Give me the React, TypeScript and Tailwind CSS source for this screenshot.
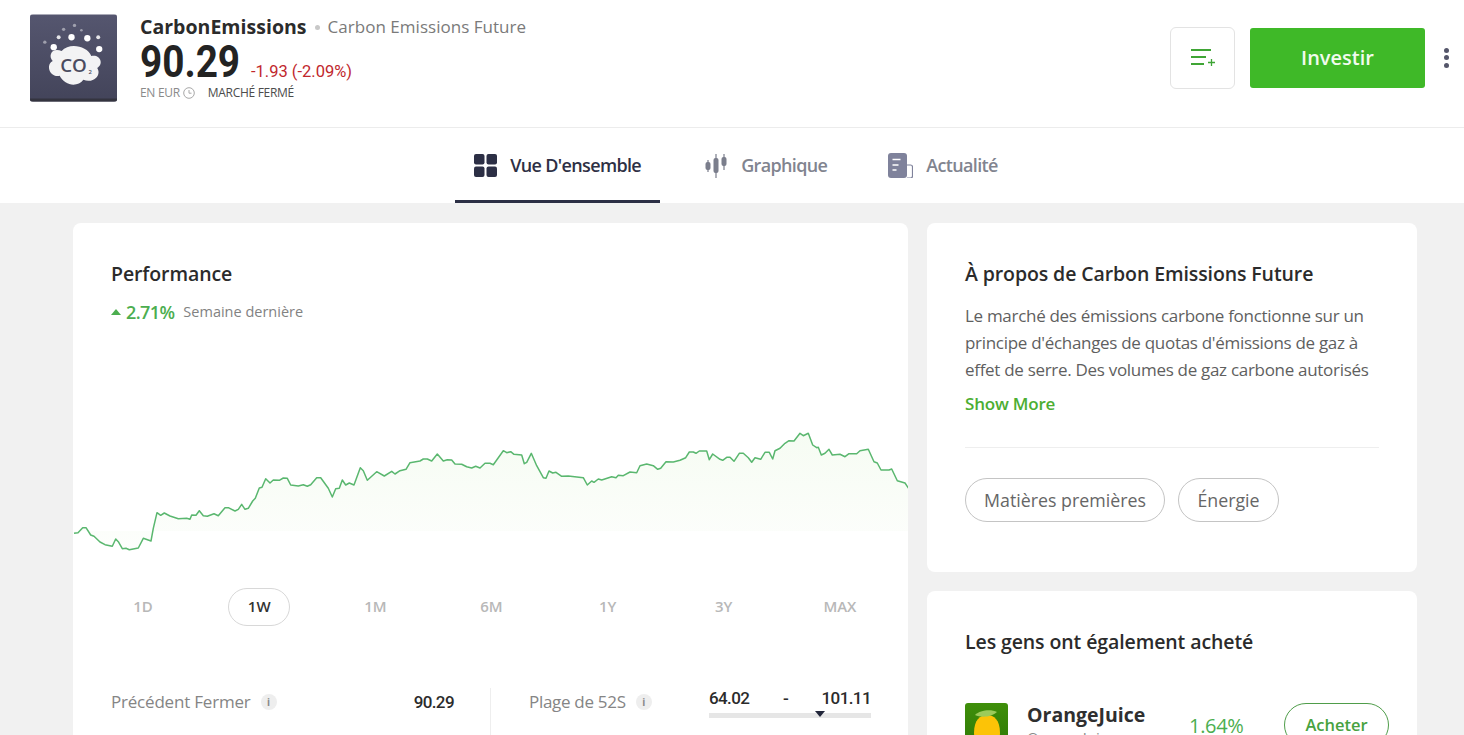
import type { ReactNode } from "react";

const a: number[][] = [[12,340],[24,338],[38,323],[48,323],[62,345],[72,349],[90,366],[105,374],[127,379],[137,357],[145,365],[157,386],[168,385],[178,389],[205,384],[220,355],[243,363],[250,325],[261,278],[272,286],[283,279],[300,288],[325,296],[350,295],[360,298],[365,285],[378,286],[388,272],[400,287],[412,289],[432,281],[445,287],[465,263],[475,263],[495,273],[505,268],[515,253],[525,268],[535,265],[548,243],[556,235],[568,204],[576,202],[587,176],[600,189],[610,180],[628,181],[640,174],[652,175],[662,195],[685,198],[700,194],[712,199],[722,194],[740,173],[752,173],[775,205],[787,231],[797,206],[808,205],[817,180],[827,195],[838,189],[852,195],[871,143],[880,152],[892,181],[920,155],[943,168],[965,154],[975,162],[990,152],[1008,148],[1020,128],[1050,123],[1060,117],[1072,117],[1085,123],[1102,102],[1120,123],[1132,119],[1145,120],[1155,132],[1175,133],[1190,140],[1205,144],[1217,139],[1230,144],[1245,130],[1260,130]];
const b: number[][] = [[10,134],[40,92],[50,98],[62,95],[72,103],[95,105],[103,131],[110,127],[124,100],[140,137],[160,173],[168,175],[177,153],[188,159],[198,157],[215,169],[235,168],[280,173],[292,195],[305,183],[312,187],[325,177],[335,180],[365,170],[378,173],[385,166],[400,167],[420,156],[440,158],[450,137],[470,132],[490,137],[503,148],[512,145],[528,125],[550,126],[570,121],[587,113],[598,96],[610,96],[618,100],[628,93],[650,93],[658,119],[668,102],[690,118],[698,121],[710,112],[720,112],[732,124],[748,100],[760,100],[775,113],[785,127],[795,113],[812,118],[825,97],[838,97],[848,117],[855,92],[870,85],[885,70],[897,62],[912,63],[930,40],[940,47],[955,40],[968,75],[980,83],[985,82],[994,105],[1005,100],[1017,88],[1027,105],[1050,103],[1065,110],[1077,101],[1100,101],[1110,92],[1135,88],[1152,125],[1162,129],[1173,150],[1197,150],[1205,147],[1222,182],[1245,189],[1257,207]];
const pts = [
  ...a.map(([x, y]) => [70 + x / 3, 420 + y / 3]),
  ...b.map(([x, y]) => [490 + x / 3, 420 + y / 3]),
];
const line = pts.map(([x, y], i) => `${i ? "L" : "M"}${x.toFixed(1)} ${y.toFixed(1)}`).join(" ");
const area = `${line} L909 531 L74 531 Z`;

const num = "font-['Roboto',sans-serif]";

function Info() {
  return (
    <span className="ml-[10px] inline-flex h-[16px] w-[16px] shrink-0 items-center justify-center rounded-full bg-[#eeeeee] text-[10px] font-bold leading-none text-[#8a8a8a]">
      i
    </span>
  );
}

function Logo() {
  return (
    <svg width="87" height="88" viewBox="0 0 88 88" className="shrink-0 rounded-[3px]">
      <defs>
        <linearGradient id="lg" x1="0" y1="0" x2="0" y2="1">
          <stop offset="0" stopColor="#55566f" />
          <stop offset="1" stopColor="#43445a" />
        </linearGradient>
      </defs>
      <rect width="88" height="88" fill="url(#lg)" />
      <rect y="85" width="88" height="3" fill="#34343f" />
      <path d="M32 37 C22 33 18 42 23 47 C16 50 19 64 30 62 C35 72 48 74 54 66 C63 70 73 62 68 54 C75 50 71 40 62 42 C58 32 40 28 32 37 Z" fill="#f3f3f4" />
      <text x="44" y="58" textAnchor="middle" fontSize="19" fontWeight="600" fill="#4a4b60" fontFamily="'Open Sans',sans-serif">CO</text>
      <text x="61" y="60" textAnchor="middle" fontSize="6" fontWeight="600" fill="#4a4b60" fontFamily="'Open Sans',sans-serif">2</text>
      <g fill="#fff">
        <circle cx="24" cy="33" r="3.2" />
        <circle cx="42" cy="23" r="3.2" />
        <circle cx="58" cy="24" r="3.2" />
        <circle cx="70" cy="35" r="3.2" />
        <circle cx="29" cy="23" r="2" opacity=".85" />
        <circle cx="69" cy="23" r="2" opacity=".85" />
        <circle cx="15" cy="28" r="1.7" opacity=".45" />
        <circle cx="34" cy="15" r="1.7" opacity=".45" />
        <circle cx="45" cy="11" r="1.7" opacity=".45" />
        <circle cx="52" cy="16" r="1.3" opacity=".45" />
      </g>
    </svg>
  );
}

function GridIcon() {
  return (
    <svg width="23" height="23" viewBox="0 0 23 23" fill="#2c2f45">
      <rect width="10.5" height="10.5" rx="2" />
      <rect x="12.5" width="10.5" height="10.5" rx="2" />
      <rect y="12.5" width="10.5" height="10.5" rx="2" />
      <rect x="12.5" y="12.5" width="10.5" height="10.5" rx="2" />
    </svg>
  );
}

function CandleIcon() {
  return (
    <svg width="24" height="25" viewBox="0 0 24 25" fill="#7b7e8c" stroke="#7b7e8c">
      <path d="M4 7v12M12 1v24M20 1v16" strokeWidth="1.2" fill="none" />
      <rect x="1.5" y="9" width="5" height="8" rx="2" stroke="none" />
      <rect x="9.5" y="5" width="5" height="15" rx="2" stroke="none" />
      <rect x="17.5" y="4" width="5" height="9" rx="2" stroke="none" />
    </svg>
  );
}

function NewsIcon() {
  return (
    <svg width="25" height="25" viewBox="0 0 25 25" fill="none">
      <rect width="19" height="25" rx="3" fill="#7f829b" />
      <path d="M4.5 6.5h8M4.5 12h6M4.5 17h4" stroke="#fff" strokeWidth="1.4" />
      <path d="M19 12h3.5a2 2 0 0 1 2 2v9a2 2 0 0 1-2 2H19" stroke="#7f829b" strokeWidth="1.2" />
    </svg>
  );
}

function OrangeIcon() {
  return (
    <svg width="43" height="44" viewBox="0 0 43 44" className="shrink-0 rounded-[3px]">
      <defs>
        <linearGradient id="og" x1="0" y1="0" x2="0" y2="1">
          <stop offset="0" stopColor="#3f8f0a" />
          <stop offset="1" stopColor="#2f7a06" />
        </linearGradient>
      </defs>
      <rect width="43" height="44" fill="url(#og)" />
      <path d="M9 30 C9 17 15 12 22 12 C29 12 35 17 35 30 C35 38 28 44 22 44 C15 44 9 38 9 30 Z" fill="#fcc307" />
      <path d="M10 12 C15 7 26 6 32 9 C27 14 16 15 10 12 Z" fill="#9ccb5a" />
    </svg>
  );
}

function Tab({ label, active, icon, className }: { label: string; active?: boolean; icon: ReactNode; className: string }) {
  return (
    <div className={`flex h-full items-center border-b-[3px] pt-[2px] ${className} ${active ? "border-[#2c2f45] text-[#2e3044]" : "border-transparent text-[#81848f]"}`}>
      {icon}
      <span className="ml-[13px] text-[18px] font-semibold tracking-[-0.65px]">{label}</span>
    </div>
  );
}

const frames = ["1D", "1W", "1M", "6M", "1Y", "3Y", "MAX"];

export default function App() {
  return (
    <div className="h-[735px] overflow-hidden bg-[#f1f1f1] font-['Open_Sans',sans-serif]">
      <header className="flex h-[128px] items-center border-b border-[#ececec] bg-white pb-[12px] pl-[30px] pr-[15px]">
        <Logo />
        <div className="ml-[23px] flex h-[88px] flex-col">
          <div className="flex h-[26px] items-center">
            <span className="text-[19.5px] font-bold leading-none tracking-[0.02px] text-[#2b2b2b]">CarbonEmissions</span>
            <span className="mx-[8px] mt-[2px] h-[5px] w-[5px] rounded-full bg-[#c8c8c8]" />
            <span className="text-[17px] leading-none tracking-[0.03px] text-[#7a7a7a]">Carbon Emissions Future</span>
          </div>
          <div className="flex h-[44px] items-center">
            <span className={`${num} w-[111px] origin-left scale-x-[0.86] text-[45px] font-bold leading-none text-[#232323]`}>90.29</span>
            <span className={`${num} mt-[21px] text-[16.5px] leading-none text-[#c1272d]`}>-1.93 (-2.09%)</span>
          </div>
          <div className="mt-[1px] flex h-[16px] items-center text-[12px] leading-none text-[#8a8a8a]">
            <span className="tracking-[-0.3px]">EN EUR</span>
            <svg width="12" height="12" viewBox="0 0 12 12" fill="none" stroke="#a8a8a8" className="ml-[3px]">
              <circle cx="6" cy="6" r="5.3" />
              <path d="M6 3v3.2h2.5" />
            </svg>
            <span className="ml-[13px] tracking-[-0.3px] text-[#4c4c4c]">MARCHÉ FERMÉ</span>
          </div>
        </div>
        <div className="ml-auto flex items-center">
          <div className="flex h-[62px] w-[65px] items-center justify-center rounded-[6px] border border-[#e3e3e3]">
            <svg width="26" height="20" viewBox="0 0 26 20" fill="none" stroke="#3fa535" strokeWidth="2">
              <path d="M1 2h20M1 9h15M1 16h13" />
              <path d="M18 14.5h7M21.5 11v7" strokeWidth="1.3" />
            </svg>
          </div>
          <div className="ml-[15px] flex h-[60px] w-[175px] items-center justify-center rounded-[3px] bg-[#3fb928] pt-[1px] text-[20px] font-semibold text-[#f1fbee]">
            Investir
          </div>
          <div className="ml-[19px] flex flex-col gap-[2.5px]">
            <span className="h-[5px] w-[5px] rounded-full bg-[#55566a]" />
            <span className="h-[5px] w-[5px] rounded-full bg-[#55566a]" />
            <span className="h-[5px] w-[5px] rounded-full bg-[#55566a]" />
          </div>
        </div>
      </header>

      <nav className="flex h-[75px] justify-center bg-white pr-[11px]">
        <Tab active label="Vue D'ensemble" icon={<GridIcon />} className="w-[205px] pl-[19px]" />
        <Tab label="Graphique" icon={<CandleIcon />} className="ml-[44px]" />
        <Tab label="Actualité" icon={<NewsIcon />} className="ml-[61px]" />
      </nav>

      <main className="flex gap-[19px] pl-[73px] pt-[20px]">
        <section className="h-[700px] w-[835px] shrink-0 rounded-[8px] bg-white pt-[38px]">
          <h2 className="h-[26px] pl-[38px] text-[19.5px] font-semibold leading-[26px] tracking-[-0.1px] text-[#2b2b2b]">Performance</h2>
          <div className="mt-[12px] flex h-[26px] items-center pl-[38px]">
            <svg width="10" height="6" viewBox="0 0 10 6" fill="#4cae4f"><path d="M5 0l5 6H0z" /></svg>
            <span className="ml-[5px] text-[18px] font-semibold tracking-[-0.6px] text-[#4cae4f]">2.71%</span>
            <span className="ml-[9px] text-[14.5px] text-[#828282]">Semaine dernière</span>
          </div>
          <svg viewBox="73 325 835 250" className="block h-[250px] w-[835px]">
            <defs>
              <linearGradient id="fill" x1="0" y1="0" x2="0" y2="1">
                <stop offset="0" stopColor="#f6fcf3" />
                <stop offset="1" stopColor="#fdfefc" />
              </linearGradient>
            </defs>
            <path d={area} fill="url(#fill)" />
            <path d={line} fill="none" stroke="#5ab76f" strokeWidth="1.5" strokeLinejoin="round" />
          </svg>
          <div className="mt-[13px] grid h-[38px] grid-cols-7 pl-[12px] pr-[10px]">
            {frames.map((f) => (
              <div key={f} className="flex items-center justify-center">
                {f === "1W" ? (
                  <span className="flex h-[38px] w-[62px] items-center justify-center rounded-full border border-[#d8d8d8] pb-[1px] text-[15px] font-semibold text-[#333]">{f}</span>
                ) : (
                  <span className="pb-[2px] text-[15px] font-semibold text-[#b8b8b8]">{f}</span>
                )}
              </div>
            ))}
          </div>
          <div className="mt-[62px] flex h-[120px] pl-[38px] pr-[37px]">
            <div className="flex h-full w-[380px] items-start justify-between border-r border-[#eeeeee] pr-[36px]">
              <div className="flex h-[28px] items-center">
                <span className="text-[17px] tracking-[-0.2px] text-[#858585]">Précédent Fermer</span>
                <Info />
              </div>
              <span className={`${num} flex h-[30px] items-center text-[17px] font-medium tracking-[-0.6px] text-[#2b2b2b]`}>90.29</span>
            </div>
            <div className="flex flex-1 items-start justify-between pl-[38px]">
              <div className="flex h-[28px] items-center">
                <span className="text-[17px] tracking-[-0.3px] text-[#858585]">Plage de 52S</span>
                <Info />
              </div>
              <div className="-mt-[1px] w-[162px]">
                <div className={`${num} flex h-[24px] items-center justify-between text-[17px] font-medium tracking-[-0.6px] text-[#2b2b2b]`}>
                  <span>64.02</span>
                  <span>-</span>
                  <span>101.11</span>
                </div>
                <div className="relative mt-[2px] h-[5px] bg-[#e6e6e6]">
                  <span className="absolute left-[106px] top-[-2px] h-0 w-0 border-x-[5px] border-t-[6px] border-x-transparent border-t-[#22263a]" />
                </div>
              </div>
            </div>
          </div>
        </section>

        <aside className="flex w-[490px] shrink-0 flex-col gap-[19px]">
          <section className="h-[349px] rounded-[8px] bg-white px-[38px] pt-[38px]">
            <h2 className="h-[26px] text-[19.5px] font-semibold leading-[26px] tracking-[-0.1px] text-[#2b2b2b]">À propos de Carbon Emissions Future</h2>
            <p className="mt-[15px] w-[410px] text-[17px] leading-[27px] tracking-[-0.3px] text-[#5f5f5f]">
              Le marché des émissions carbone fonctionne sur un principe d'échanges de quotas d'émissions de gaz à effet de serre. Des volumes de gaz carbone autorisés
            </p>
            <div className="mt-[8px] h-[26px] text-[17px] font-semibold leading-[26px] tracking-[-0.2px] text-[#4cae32]">Show More</div>
            <div className="mt-[30px] h-px w-[414px] bg-[#eeeeee]" />
            <div className="mt-[30px] flex gap-[13px]">
              <span className="flex h-[44px] w-[200px] items-center justify-center rounded-full border border-[#c4c4c4] text-[17.8px] text-[#666]">Matières premières</span>
              <span className="flex h-[44px] w-[101px] items-center justify-center rounded-full border border-[#c4c4c4] text-[17.8px] text-[#666]">Énergie</span>
            </div>
          </section>
          <section className="h-[300px] rounded-[8px] bg-white pl-[38px] pr-[28px] pt-[38px]">
            <h2 className="h-[26px] text-[19.5px] font-semibold leading-[26px] tracking-[-0.1px] text-[#2b2b2b]">Les gens ont également acheté</h2>
            <div className="mt-[48px] flex items-start">
              <OrangeIcon />
              <div className="ml-[19px] flex w-[162px] flex-col">
                <span className="text-[19.5px] font-bold leading-[24px] text-[#2f2f2f]">OrangeJuice</span>
                <span className="text-[15px] leading-[20px] text-[#8a8a8a]">Orange Juice</span>
              </div>
              <span className="mt-[9px] text-[20px] font-medium leading-[27px] tracking-[-0.3px] text-[#4cae4f]">1.64%</span>
              <span className="ml-auto flex h-[44px] w-[105px] items-center justify-center rounded-full border border-[#4f9d4a] text-[16.5px] font-semibold text-[#48a23f]">Acheter</span>
            </div>
          </section>
        </aside>
      </main>
    </div>
  );
}
